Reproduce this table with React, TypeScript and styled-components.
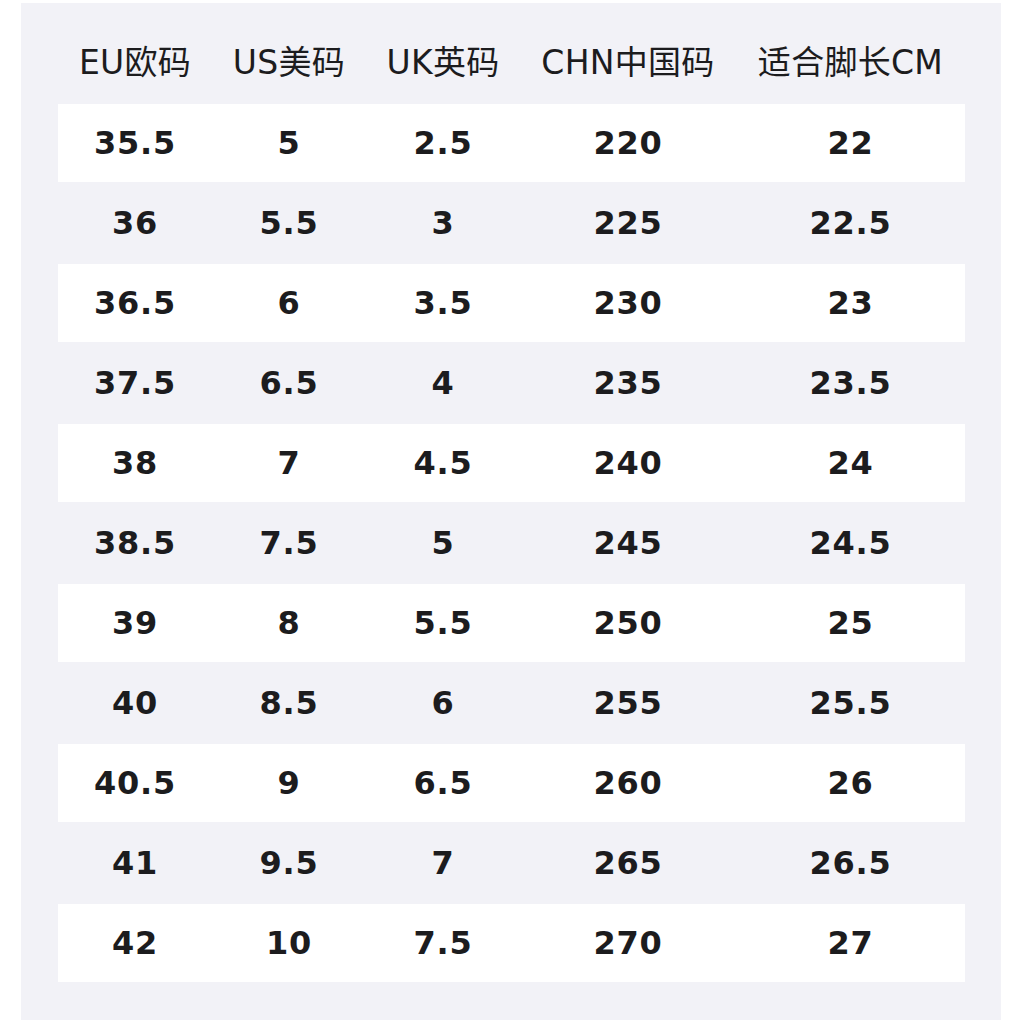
import styled, { createGlobalStyle } from 'styled-components';

const GlobalStyle = createGlobalStyle`
  html, body {
    margin: 0;
    padding: 0;
    background: #ffffff;
  }
`;

const Page = styled.div`
  width: 1024px;
  height: 1024px;
  padding: 3px 23px 4px 21px;
  box-sizing: border-box;
`;

const Panel = styled.section`
  height: 100%;
  background: #f2f2f7;
  padding: 20px 36px 37px 37px;
  box-sizing: border-box;
`;

const Table = styled.div`
  display: grid;
  grid-template-columns: 154px 154px 154px 216px 229px;
  grid-template-rows: 81px;
  grid-auto-rows: 80px;
`;

const HeadCell = styled.div`
  display: flex;
  align-items: center;
  justify-content: center;
  padding-bottom: 7px;
  font-family: 'DejaVu Sans', 'Noto Sans CJK SC', sans-serif;
  font-size: 33px;
  letter-spacing: 0.3px;
  color: #1c1c1e;
  white-space: nowrap;
`;

const Cell = styled.div<{ $white: boolean }>`
  display: flex;
  align-items: center;
  justify-content: center;
  margin-bottom: 2px;
  background: ${(p) => (p.$white ? '#ffffff' : 'transparent')};
  font-family: 'DejaVu Sans', sans-serif;
  font-weight: bold;
  font-size: 32px;
  letter-spacing: 0.8px;
  color: #1c1c1e;
`;

const headers = ['EU欧码', 'US美码', 'UK英码', 'CHN中国码', '适合脚长CM'];

const rows = [
  ['35.5', '5', '2.5', '220', '22'],
  ['36', '5.5', '3', '225', '22.5'],
  ['36.5', '6', '3.5', '230', '23'],
  ['37.5', '6.5', '4', '235', '23.5'],
  ['38', '7', '4.5', '240', '24'],
  ['38.5', '7.5', '5', '245', '24.5'],
  ['39', '8', '5.5', '250', '25'],
  ['40', '8.5', '6', '255', '25.5'],
  ['40.5', '9', '6.5', '260', '26'],
  ['41', '9.5', '7', '265', '26.5'],
  ['42', '10', '7.5', '270', '27'],
];

export default function App() {
  return (
    <Page>
      <GlobalStyle />
      <Panel>
        <Table>
          {headers.map((h) => (
            <HeadCell key={h}>{h}</HeadCell>
          ))}
          {rows.map((row, i) =>
            row.map((v, j) => (
              <Cell key={`${i}-${j}`} $white={i % 2 === 0}>
                {v}
              </Cell>
            ))
          )}
        </Table>
      </Panel>
    </Page>
  );
}
